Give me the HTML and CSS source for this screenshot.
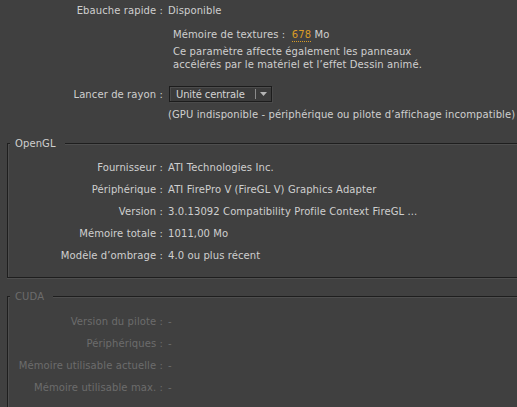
FILE: index.html
```html
<!DOCTYPE html>
<html>
<head>
<meta charset="utf-8">
<title>Préférences GPU</title>
<link rel="stylesheet" href="styles.css">
</head>
<body>
<div class="page">
  <div class="row first">
    <span class="label">Ebauche rapide :</span>
    <span class="value">Disponible</span>
  </div>
  <div class="textures">
    <div class="mem">Mémoire de textures :&nbsp; <span class="num">678</span> Mo</div>
    <p class="note">Ce paramètre affecte également les panneaux<br>accélérés par le matériel et l’effet Dessin animé.</p>
  </div>
  <div class="row ray">
    <span class="label">Lancer de rayon :</span>
    <div class="select">
      <span class="select-text">Unité centrale</span>
      <span class="select-arrow"><svg width="7" height="4" viewBox="0 0 7 4"><path d="M0 0h7L3.5 4z" fill="#b4b4b4"/></svg></span>
    </div>
  </div>
  <div class="hint">(GPU indisponible - périphérique ou pilote d’affichage incompatible)</div>

  <div class="group opengl">
    <span class="legend">OpenGL</span>
    <div class="row"><span class="label">Fournisseur :</span><span class="value">ATI Technologies Inc.</span></div>
    <div class="row"><span class="label">Périphérique :</span><span class="value">ATI FirePro V (FireGL V) Graphics Adapter</span></div>
    <div class="row"><span class="label">Version :</span><span class="value">3.0.13092 Compatibility Profile Context FireGL ...</span></div>
    <div class="row"><span class="label">Mémoire totale :</span><span class="value">1011,00 Mo</span></div>
    <div class="row"><span class="label">Modèle d’ombrage :</span><span class="value">4.0 ou plus récent</span></div>
  </div>

  <div class="group cuda disabled">
    <span class="legend">CUDA</span>
    <div class="row"><span class="label">Version du pilote :</span><span class="value">-</span></div>
    <div class="row"><span class="label">Périphériques :</span><span class="value">-</span></div>
    <div class="row"><span class="label">Mémoire utilisable actuelle :</span><span class="value">-</span></div>
    <div class="row"><span class="label">Mémoire utilisable max. :</span><span class="value">-</span></div>
  </div>
</div>
</body>
</html>
```

FILE: styles.css
```css
html, body {
  margin:0;
  padding:0;
  background:#404040;
  overflow:hidden;
}

body {
  font-family:'DejaVu Sans', Verdana, sans-serif;
  font-size:10px;
  letter-spacing:0.1px;
  color:#cfcfcf;
}

p {
  margin:0;
}

.page {
  width:600px;
}

.row {
  display:flex;
  align-items:center;
  height:22px;
}

.label {
  width:163px;
  flex:none;
  text-align:right;
  white-space:nowrap;
  margin-right:5px;
}

.value {
  white-space:nowrap;
}

.row.first {
  height:20px;
}

.textures {
  margin:6px 0 0 173px;
  line-height:14px;
}

.mem {
  height:18px;
  line-height:18px;
}

.num {
  color:#d99c26;
  border-bottom:1px dotted #d99c26;
  line-height:12px;
  display:inline-block;
}

.note {
  line-height:13px;
  margin-top:1px;
}

.row.ray {
  margin-top:13px;
  height:20px;
}

.select {
  display:flex;
  align-items:center;
  height:14px;
  width:101px;
  border:1px solid #1c1c1c;
  box-shadow:inset 1px 1px 0 #4c4c4c, 1px 1px 0 #4a4a4a;
  background:#3b3b3b;
  margin-left:1px;
}

.select-text {
  flex:1;
  padding-left:6px;
  letter-spacing:-0.15px;
  white-space:nowrap;
  color:#d4d4d4;
}

.select-arrow {
  display:flex;
  align-items:center;
  justify-content:center;
  width:15px;
  height:10px;
  border-left:1px solid #8a8a8a;
}

.hint {
  margin-left:168px;
  height:22px;
  line-height:22px;
  white-space:nowrap;
}

.group {
  position:relative;
  margin-left:7px;
  border:1px solid #1e1e1e;
  border-right:none;
  box-shadow:inset 1px 1px 0 #4e4e4e, 0 1px 0 #4e4e4e;
}

.group .label {
  width:155px;
}

.legend {
  position:absolute;
  top:-7px;
  left:2px;
  padding:0 9px 0 5px;
  line-height:14px;
  background:#404040;
}

.opengl {
  margin-top:17px;
  padding:12px 0 11px;
}

.cuda {
  margin-top:18px;
  padding:13px 0 20px;
}

.disabled {
  color:#6c6c6c;
}
```
